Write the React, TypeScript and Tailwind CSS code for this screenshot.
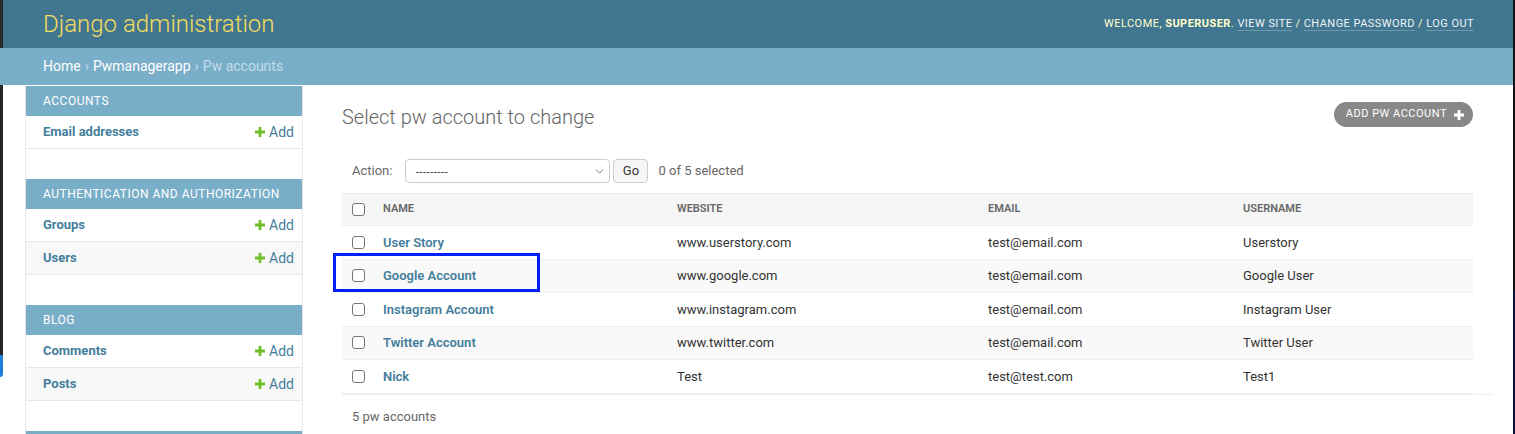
import { ChevronDown } from 'lucide-react'

type Row = {
  name: string
  website: string
  email: string
  username: string
}

const rows: Row[] = [
  { name: 'User Story', website: 'www.userstory.com', email: 'test@email.com', username: 'Userstory' },
  { name: 'Google Account', website: 'www.google.com', email: 'test@email.com', username: 'Google User' },
  { name: 'Instagram Account', website: 'www.instagram.com', email: 'test@email.com', username: 'Instagram User' },
  { name: 'Twitter Account', website: 'www.twitter.com', email: 'test@email.com', username: 'Twitter User' },
  { name: 'Nick', website: 'Test', email: 'test@test.com', username: 'Test1' },
]

const modules = [
  { title: 'Accounts', models: ['Email addresses'] },
  { title: 'Authentication and Authorization', models: ['Groups', 'Users'] },
  { title: 'Blog', models: ['Comments', 'Posts'] },
]

const PlusIcon = ({ className }: { className: string }) => (
  <svg className={className} viewBox="0 0 10 10" width="10" height="10">
    <path d="M3.6 0h2.8v3.6H10v2.8H6.4V10H3.6V6.4H0V3.6h3.6z" fill="currentColor" />
  </svg>
)

const Checkbox = () => (
  <span className="block h-[13px] w-[13px] rounded-[3px] border border-[#767676] bg-white" />
)

const cols = 'grid grid-cols-[33px_294px_311px_255px_1fr] items-center'

function Sidebar() {
  return (
    <nav className="w-[278px] shrink-0 border-x border-[#e8e8e8] pt-px">
      {modules.map(mod => (
        <div className="mb-[30px]" key={mod.title}>
          <div className="flex h-[30px] items-center bg-[#79aec8] pl-[17px] text-[12px] uppercase tracking-[0.5px] text-white">
            {mod.title}
          </div>
          {mod.models.map((model, i) => (
            <div
              className={`flex h-[33px] items-center justify-between border-b border-[#e8e8e8] pl-[17px] pr-[8px] text-[13px] ${
                i % 2 === 1 ? 'bg-[#f8f8f8]' : 'bg-white'
              }`}
              key={model}
            >
              <span className="font-bold text-[#447e9b]">{model}</span>
              <span className="flex items-center gap-[4px] text-[14px] text-[#447e9b]">
                <PlusIcon className="text-[#70bf2b]" />
                Add
              </span>
            </div>
          ))}
        </div>
      ))}
      <div className="h-[30px] bg-[#79aec8]" />
    </nav>
  )
}

function ChangeList() {
  return (
    <main className="min-w-0 flex-1 pl-[39px] pr-[40px] pt-[17px]">
      <div className="flex items-start justify-between">
        <h1 className="pt-[3px] text-[20px] font-light leading-[24px] text-[#666]">
          Select pw account to change
        </h1>
        <a className="flex h-[25px] items-center gap-[7px] rounded-full bg-[#888] pl-[12px] pr-[9px] text-[11px] uppercase tracking-[0.5px] text-white">
          Add pw account
          <PlusIcon className="text-white" />
        </a>
      </div>

      <div className="mt-[29px] flex h-[26px] items-center pl-[10px] text-[13px] text-[#666]">
        <span>Action:</span>
        <div className="ml-[13px] flex h-[24px] w-[205px] items-center justify-between rounded-[4px] border border-[#ccc] bg-white pl-[9px] pr-[3px] text-[#333]">
          <span className="text-[10px] font-['DejaVu_Sans',sans-serif]">---------</span>
          <ChevronDown className="text-[#555]" size={13} strokeWidth={1.5} />
        </div>
        <span className="ml-[3px] flex h-[24px] w-[35px] items-center justify-center rounded-[4px] border border-[#ccc] bg-[#f6f6f6] text-[#333]">
          Go
        </span>
        <span className="ml-[10px]">0 of 5 selected</span>
      </div>

      <div className="mt-[9px]">
        <div className={`${cols} h-[33px] border-y border-[#eee] bg-[#f6f6f6] text-[11px] font-semibold uppercase text-[#666]`}>
          <span className="pl-[10px]">
            <Checkbox />
          </span>
          <span className="pl-[8px]">Name</span>
          <span className="pl-[8px]">Website</span>
          <span className="pl-[8px]">Email</span>
          <span className="pl-[8px]">Username</span>
        </div>
        {rows.map((row, i) => (
          <div
            className={`${cols} relative h-[33.5px] border-b border-[#eee] text-[13px] text-[#333] ${
              i % 2 === 1 ? 'bg-[#f9f9f9]' : 'bg-white'
            }`}
            key={row.name}
          >
            <span className="pl-[10px]">
              <Checkbox />
            </span>
            <span className="pl-[8px] font-semibold text-[#447e9b]">{row.name}</span>
            <span className="pl-[8px]">{row.website}</span>
            <span className="pl-[8px]">{row.email}</span>
            <span className="pl-[8px]">{row.username}</span>
            {row.name === 'Google Account' && (
              <span className="absolute left-[-9px] top-[-7px] h-[39px] w-[207px] border-[3px] border-[#0022f5]" />
            )}
          </div>
        ))}
        <div className="-mr-[20px] h-[41px] border-t border-[#eee] pl-[10px] pt-[14px] text-[13px] leading-[16px] text-[#666]">
          5 pw accounts
        </div>
      </div>
    </main>
  )
}

export default function App() {
  return (
    <div className="flex h-[434px] w-full overflow-hidden bg-white font-['Roboto',sans-serif]">
      <div className="flex min-w-0 flex-1 flex-col">
        <header className="flex h-[48px] shrink-0 bg-[#417690]">
          <div className="w-[3px] bg-[#2b2b2b]" />
          <div className="flex flex-1 items-center justify-between pl-[40px] pr-[39px]">
            <span className="text-[24px] font-light text-[#f5dd5d]">Django administration</span>
            <div className="text-[11px] uppercase tracking-[0.45px] text-[#ffc]">
              Welcome, <strong className="font-bold">superuser</strong>.{' '}
              <a className="border-b border-white/25 text-[#f0f4f6]">View site</a> /{' '}
              <a className="border-b border-white/25 text-[#f0f4f6]">Change password</a> /{' '}
              <a className="border-b border-white/25 text-[#f0f4f6]">Log out</a>
            </div>
          </div>
        </header>
        <div className="flex h-[37px] shrink-0 items-center bg-[#79aec8] pl-[43px] text-[14px] text-white">
          Home <span className="mx-[4px] text-[#c4dce8]">›</span> Pwmanagerapp{' '}
          <span className="mx-[4px] text-[#c4dce8]">›</span>
          <span className="text-[#c4dce8]">Pw accounts</span>
        </div>
        <div className="flex min-h-0 flex-1">
          <div className="flex w-[3px] shrink-0 flex-col">
            <div className="h-[270px] bg-[#262626]" />
            <div className="h-[22px] rounded-br-[3px] bg-[#1f7fd8]" />
          </div>
          <div className="w-[22px] shrink-0" />
          <Sidebar />
          <ChangeList />
        </div>
      </div>
      <div className="flex w-[2px] flex-col bg-[#111]">
        <div className="h-[290px]" />
        <div className="flex-1 bg-[#0b1240]" />
      </div>
    </div>
  )
}
